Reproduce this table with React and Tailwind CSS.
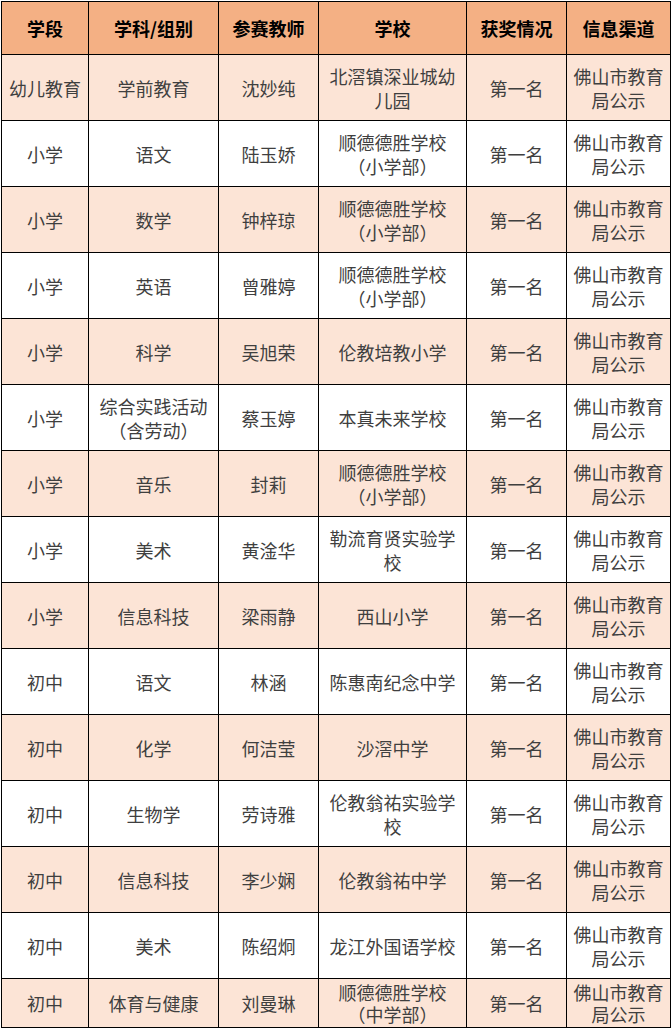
const rows = [
  ['幼儿教育', '学前教育', '沈妙纯', '北滘镇深业城幼儿园'],
  ['小学', '语文', '陆玉娇', '顺德德胜学校（小学部）'],
  ['小学', '数学', '钟梓琼', '顺德德胜学校（小学部）'],
  ['小学', '英语', '曾雅婷', '顺德德胜学校（小学部）'],
  ['小学', '科学', '吴旭荣', '伦教培教小学'],
  ['小学', '综合实践活动（含劳动）', '蔡玉婷', '本真未来学校'],
  ['小学', '音乐', '封莉', '顺德德胜学校（小学部）'],
  ['小学', '美术', '黄淦华', '勒流育贤实验学校'],
  ['小学', '信息科技', '梁雨静', '西山小学'],
  ['初中', '语文', '林涵', '陈惠南纪念中学'],
  ['初中', '化学', '何洁莹', '沙滘中学'],
  ['初中', '生物学', '劳诗雅', '伦教翁祐实验学校'],
  ['初中', '信息科技', '李少娴', '伦教翁祐中学'],
  ['初中', '美术', '陈绍炯', '龙江外国语学校'],
  ['初中', '体育与健康', '刘曼琳', '顺德德胜学校（中学部）'],
];

const headers = ['学段', '学科/组别', '参赛教师', '学校', '获奖情况', '信息渠道'];
const widths = ['w-[87px]', 'w-[130px]', 'w-[100px]', 'w-[148px]', 'w-[100px]', 'w-[104px]'];

export default function App() {
  return (
    <div
      className="w-[671px] bg-white pt-px pl-px"
      style={{ fontFamily: '"Noto Sans CJK SC", "Noto Sans", sans-serif' }}
    >
      <table className="table-fixed border-collapse text-[18px] leading-[24px] text-[#3f3f3f]">
        <colgroup>
          {widths.map((w, i) => (
            <col key={i} className={w} />
          ))}
        </colgroup>
        <thead>
          <tr className="bg-[#F4B084]">
            {headers.map((h) => (
              <th key={h} className="h-[53px] border border-black px-1 text-center font-bold text-black">
                {h}
              </th>
            ))}
          </tr>
        </thead>
        <tbody>
          {rows.map((r, i) => {
            const last = i === rows.length - 1;
            return (
              <tr key={i} className={i % 2 === 0 ? 'bg-[#FCE4D6]' : 'bg-white'}>
                {[...r, '第一名', '佛山市教育局公示'].map((c, j) => (
                  <td
                    key={j}
                    className={`${last ? 'h-[49px]' : 'h-[66px]'} border border-black ${j === 5 ? 'px-[2px]' : 'px-[7px]'} text-center align-middle ${last && j > 2 && j !== 4 ? 'leading-[22px]' : ''}`}
                  >
                    {c}
                  </td>
                ))}
              </tr>
            );
          })}
        </tbody>
      </table>
    </div>
  );
}
